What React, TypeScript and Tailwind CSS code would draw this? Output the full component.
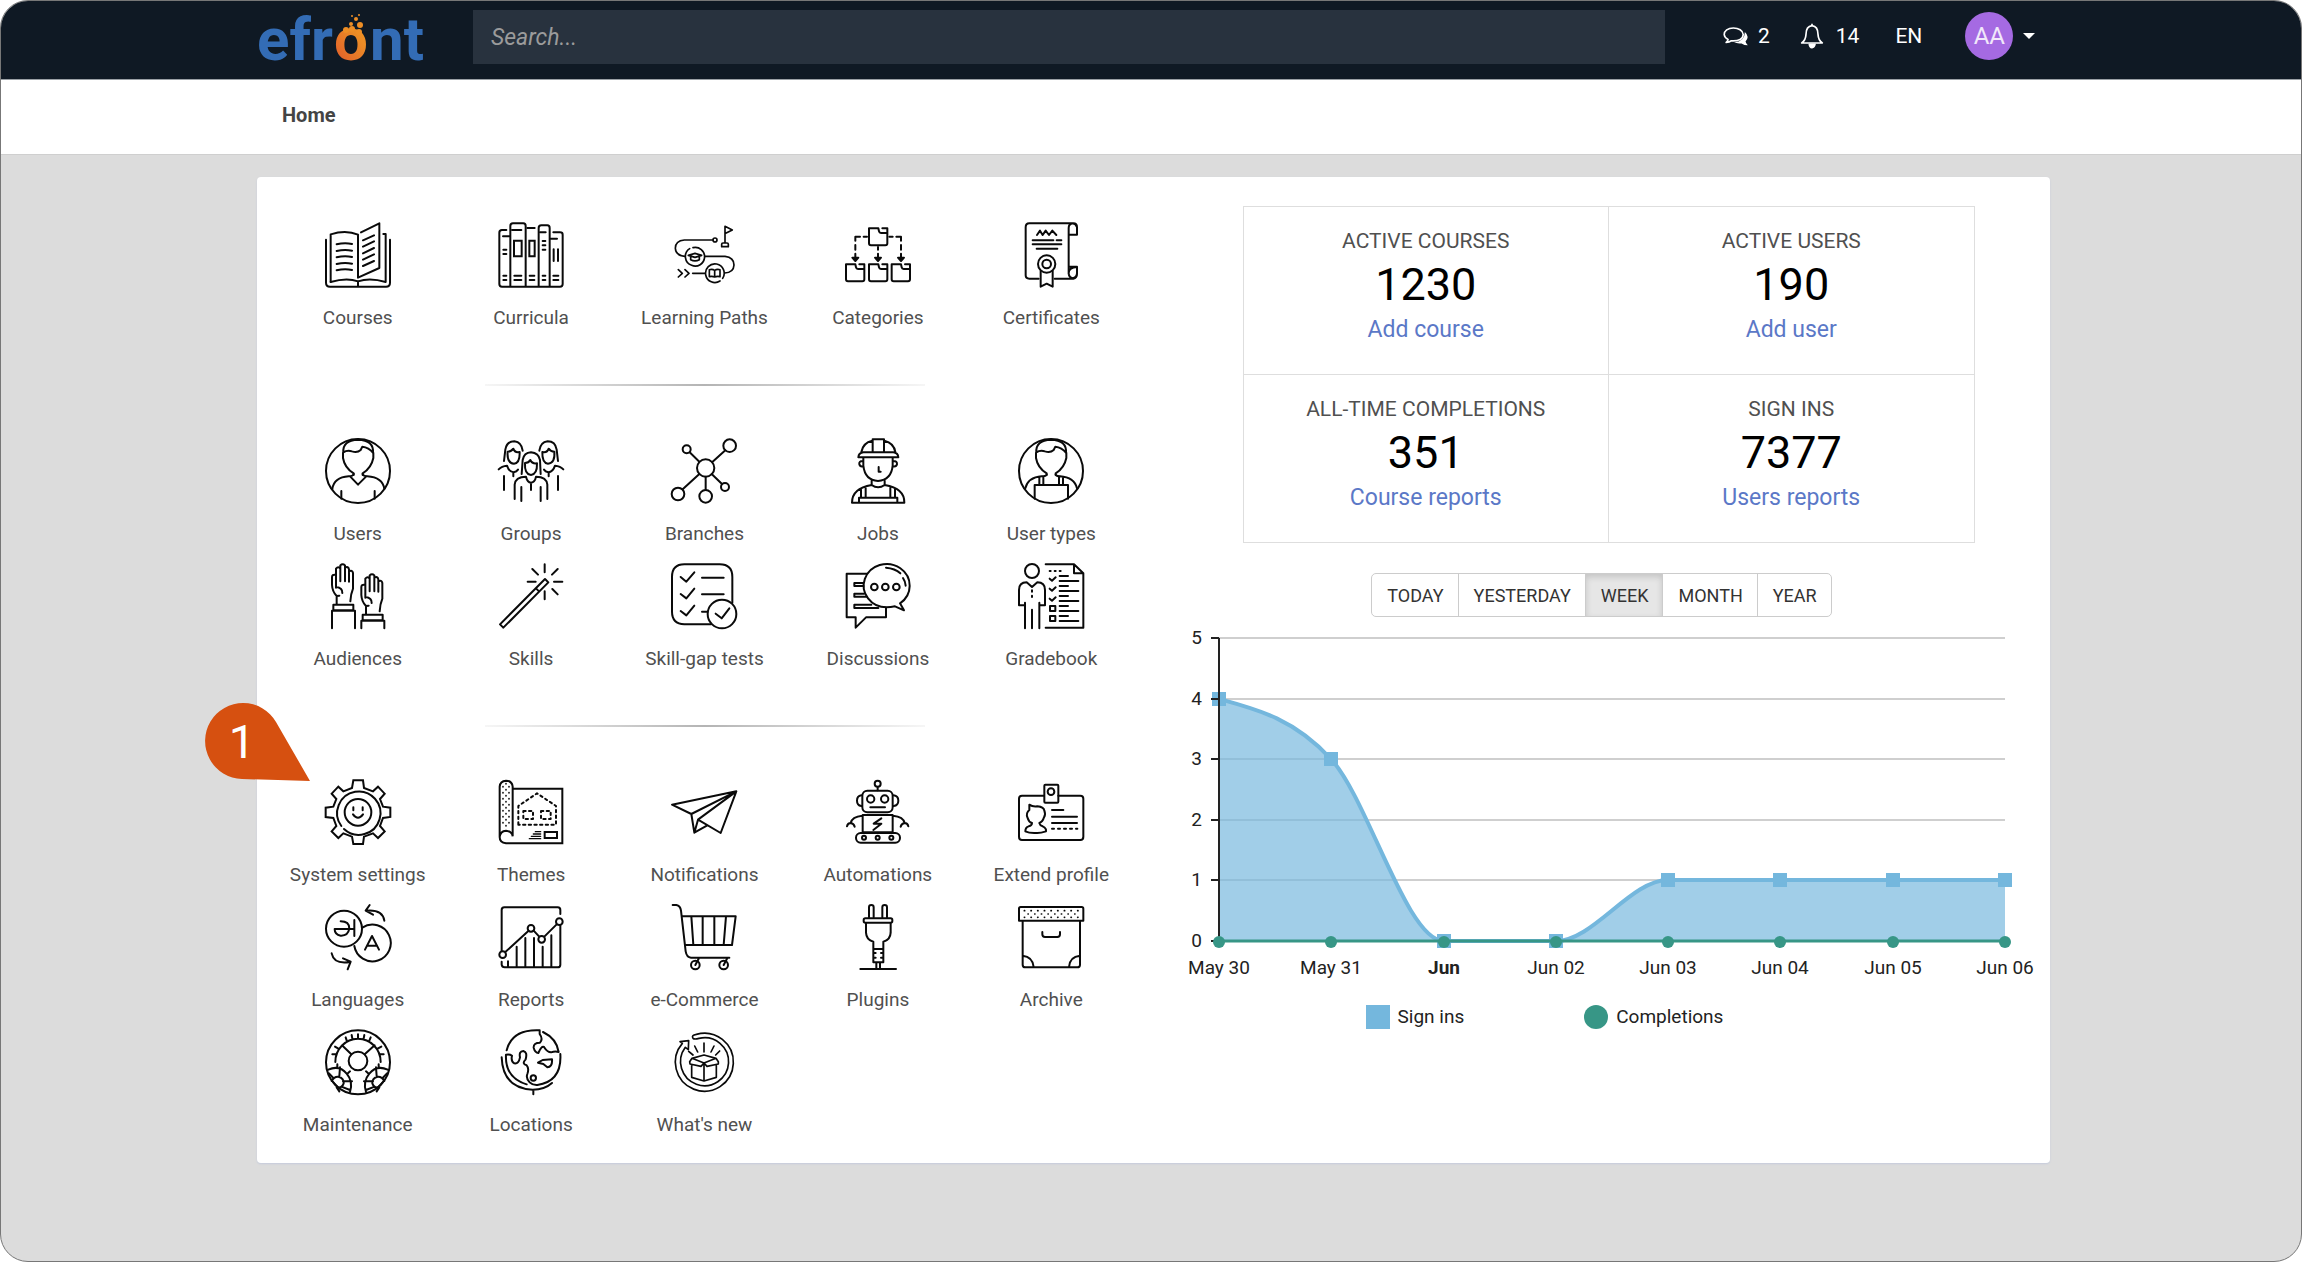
import React from "react";

type IconProps = { box: string; width?: number; children: React.ReactNode };

/** Line drawing on a 198-unit square. */
function Icon({ box, width = 6, children }: IconProps) {
  return (
    <svg
      viewBox={box}
      className="size-[66px] overflow-visible"
      fill="none"
      stroke="#0a0a0a"
      strokeWidth={width}
      strokeLinecap="round"
      strokeLinejoin="round"
      aria-hidden="true"
    >
      {children}
    </svg>
  );
}

const CoursesIcon = () => (
  <Icon box="165 64 198 198">
    <path d="M182 244V101Q228 86 264 102V231L328 202V68L273 95" />
    <path d="M168 117V246Q168 258 180 258H348Q360 258 360 246V117M182 244Q230 230 264 242Q300 230 347 244V100H340M264 242V257" />
    <path d="M200 131Q224 125 246 130M200 151Q224 145 246 150M200 170Q224 164 246 169M200 190Q224 184 246 189M200 209Q224 203 246 208" />
    <path d="M279 119L312 104M279 138L312 122M279 158L312 142M279 177L312 161M279 196L312 181" />
  </Icon>
);

const CurriculaIcon = () => (
  <Icon box="686 64 198 198">
    <path d="M711 88H698Q690 88 690 96V250Q690 258 698 258H872Q880 258 880 250V102Q880 95 872 95H852M723 258V76Q723 68 731 68H762Q769 68 769 76V258M808 258V82Q808 74 816 74H834Q841 74 841 82V258" />
    <path d="M728 88H756M701 107H720M774 82H796M812 95H829M844 114H863" />
    <path d="M734 120H757V167H734ZM780 120H796V167H780Z" strokeLinejoin="miter" />
    <path d="M702 147H711M702 160H711M820 121H828M820 134H828M820 147H828M853 146V181M866 146V181M702 225H711M702 238H711M735 225H756M735 238H756M781 225H795M781 238H795M820 225H828M820 238H828M852 225H867M852 238H867" />
  </Icon>
);

const LearningPathsIcon = () => (
  <Icon box="36 64 198 198" width={5}>
    <path d="M161 118H76Q49 120 49 143Q50 165 78 167M137 167H198Q225 170 225 193Q224 216 197 217M137 218H101M58 207L70 218L58 229M78 207L90 218L78 229" />
    <circle cx="168" cy="118" r="6" />
    <path d="M92 144A28 28 0 0 0 98 194A28 28 0 1 0 102 141M191 233A28 28 0 1 0 183 241" />
    <path d="M198 126V77L220 88L200 98M188 138V131Q188 127 192 127H204Q208 127 208 131V138Z" />
    <path d="M88 164L108 158L128 164L108 170ZM95 168V177Q108 184 121 177V168M151 207Q160 204 167 209Q174 204 183 207V228Q174 226 167 229Q160 226 151 228ZM167 209V229" />
  </Icon>
);

const folder = "M586 191H558V236Q558 242 564 242H607Q613 242 613 236V191H598M586 191L588 200Q589 205 594 205H612";
const CategoriesIcon = () => (
  <Icon box="555 64 198 198" width={6}>
    <path d={folder} />
    <path d={folder} transform="translate(69 0)" />
    <path d={folder} transform="translate(137 0)" />
    <path d={folder} transform="translate(69 -108)" />
    <path d="M621 108H611M600 108H586V120M586 133V147M586 159V178M654 139V147M654 159V178M688 108H698M709 108H723V120M723 133V147M723 159V178" />
    <path d="M577 171H595L586 181ZM645 171H663L654 181ZM714 171H732L723 181Z" fill="#0a0a0a" />
  </Icon>
);

const CertificatesIcon = () => (
  <Icon box="1074 64 198 198" width={6}>
    <path d="M1136 234H1108Q1097 234 1097 224V80Q1097 68 1108 68H1240Q1251 68 1251 80V102H1226M1184 234H1240Q1251 232 1251 220V198H1226M1226 220V82Q1226 70 1238 68Q1248 70 1251 80M1226 218Q1227 230 1238 233Q1250 230 1251 218V199Q1226 200 1226 218" />
    <path d="M1131 103L1140 90L1148 103L1157 90L1167 103L1177 90L1189 103M1118 119H1180M1190 119H1204M1118 131H1204M1130 144H1192" />
    <circle cx="1160" cy="190" r="26" />
    <circle cx="1160" cy="190" r="13" />
    <path d="M1142 211V258L1160 249L1178 258V211" />
  </Icon>
);

const userHead =
  "M220 96Q217 59 264 57Q312 59 309 97M220 95Q232 87 246 92Q262 97 272 88L277 78Q296 80 310 97V112Q304 142 278 158V163M219 96V112Q224 142 251 158V163";

const UsersIcon = () => (
  <Icon box="165 52 198 198">
    <circle cx="264" cy="151" r="96" />
    <path d={userHead} />
    <path d="M251 160Q249 167 236 167Q192 170 187 205M278 160Q280 167 292 167Q338 170 343 205M241 168L264 192L288 168M214 211V234M314 211V234" />
  </Icon>
);

const sideWoman =
  "M704 121L708 87Q712 62 735 62Q757 65 760 90M715 93Q712 127 734 129Q752 127 751 94Q736 97 732 84Q726 93 715 93M688 146Q697 136 713 135Q719 154 733 155Q742 153 746 147M732 155V167M704 166V208";
const GroupsIcon = () => (
  <Icon box="686 52 198 198">
    <path d={sideWoman} />
    <path d={sideWoman} transform="translate(1570 0) scale(-1 1)" />
    <path d="M757 160L760 118Q764 96 785 95Q808 97 812 118L814 160M767 127Q765 161 785 163Q804 161 803 128Q788 130 783 118Q778 127 767 127M736 235V192Q738 168 770 168Q774 185 785 186Q797 185 800 168Q832 168 834 192V235M785 186V208M756 199V241M814 199V241" />
  </Icon>
);

const BranchesIcon = () => (
  <Icon box="36 52 198 198">
    <circle cx="140" cy="142" r="26" />
    <circle cx="212" cy="75" r="19" />
    <circle cx="83" cy="86" r="12" />
    <circle cx="198" cy="199" r="12" />
    <circle cx="57" cy="220" r="19" />
    <circle cx="140" cy="227" r="19" />
    <path d="M160 124L199 89M121 123L92 95M158 160L189 190M121 160L71 206M140 168V208" />
  </Icon>
);

const JobsIcon = () => (
  <Icon box="555 52 198 198">
    <path d="M595 110Q596 97 610 95H700Q714 97 715 110ZM604 94Q609 66 637 60M673 60Q702 67 706 94M638 94V56H672V94" />
    <path d="M610 113V135Q615 179 654 181Q694 178 698 135V113M608 121Q596 121 598 131Q600 139 609 137M700 121Q712 121 711 131Q709 139 699 137M656 139V153H662" />
    <path d="M635 180V193Q654 207 674 193V180M635 193Q576 203 576 246H733Q734 203 674 193M597 246V231H712V246M603 206V229M617 202V229M691 202V229M705 206V229" />
  </Icon>
);

const UserTypesIcon = () => (
  <Icon box="1074 52 198 198">
    <circle cx="1173" cy="151" r="96" />
    <path d={userHead} transform="translate(909 0)" />
    <path d="M1160 162Q1158 167 1145 167Q1104 170 1096 203M1187 162Q1189 167 1200 167Q1243 170 1251 203M1124 234V193H1224V234M1138 168V192M1150 168V192M1197 168V192M1209 168V192" />
  </Icon>
);

const hand =
  "M200 549V525L208 524M200 525Q187 512 186 492V468Q186 460 196 461M198 500V443Q205 435 211 443V481M211 443V433Q218 426 225 433V481M225 440Q235 435 237 445V482M237 451Q247 446 249 456V503Q242 520 241 541M198 497Q218 500 217 516";
const AudiencesIcon = () => (
  <Icon box="165 426 198 198">
    <path d={hand} />
    <path d={hand} transform="translate(88 30)" />
    <path d="M190 551H250V568H190ZM186 622V569H255V622M278 581H338V598H278ZM274 622V599H343V622" />
  </Icon>
);

const SkillsIcon = () => (
  <Icon box="686 426 198 198">
    <path d="M692 610L827 474L837 484L702 620ZM800 502L809 511M826 430V454M826 511V535M775 482H799M854 482H879M789 444L806 461M865 444L848 461M849 504L865 520" />
  </Icon>
);

const SkillGapIcon = () => (
  <Icon box="36 426 198 198">
    <path d="M156 610H76Q39 608 39 572V468Q39 430 76 430H182Q220 430 220 468V545M65 468L82 482L106 454M65 519L82 532L106 503M65 570L82 583L106 554M129 470H194M129 520H194M129 572H145M170 578L188 592L211 562" />
    <circle cx="189" cy="579" r="43" />
  </Icon>
);

const DiscussionsIcon = () => (
  <Icon box="555 426 198 198">
    <path d="M620 458H560V589H587V620L618 589H678V560" />
    <path d="M732 568L705 556Q692 559 680 559A69 65 0 1 1 720 547Z" />
    <circle cx="643" cy="498" r="10" />
    <circle cx="676" cy="498" r="10" />
    <circle cx="709" cy="498" r="10" />
    <path d="M678 440Q705 442 721 457M729 471Q736 481 737 494M608 486H583V495H610M612 518H583V527H620M634 551H583V561H655" />
  </Icon>
);

const GradebookIcon = () => (
  <Icon box="1074 426 198 198">
    <circle cx="1116" cy="450" r="21" />
    <path d="M1095 622V545M1095 553H1077V507Q1077 484 1100 484L1116 498L1132 484Q1155 484 1155 507V553H1138M1138 545V622M1116 566V622M1116 508V512M1116 524V528" />
    <path d="M1157 430H1242L1270 457V620H1157M1242 430V457H1270M1169 450H1172M1184 450H1187M1199 450H1202M1169 473L1176 479L1187 469M1169 503L1176 509L1187 499M1169 533L1176 539L1187 529M1170 555H1186V570H1170ZM1170 585H1186V600H1170Z" />
    <path d="M1199 465H1224M1199 480H1255M1199 495H1224M1199 510H1255M1199 525H1224M1199 540H1255M1199 555H1224M1199 570H1255M1199 585H1224M1199 600H1255" />
  </Icon>
);

const SystemSettingsIcon = () => (
  <Icon box="405 265 198 198">
    <path
      strokeLinejoin="miter"
      d="M486 292L490 269H519L522 292L549 302L564 288L584 309L570 325L579 348L601 351V379L579 382L570 406L584 422L564 442L549 428L522 438L519 460H490L486 438L460 428L445 442L425 422L439 406L430 382L407 379V351L430 348L439 325L425 309L445 288L460 302Z"
    />
    <path d="M454 406A65 65 0 1 1 462 415" />
    <circle cx="504" cy="365" r="40" />
    <path d="M490 350V359M518 350V359M489 371Q504 391 519 371" />
  </Icon>
);

const ThemesIcon = () => (
  <Icon box="926 265 198 198">
    <path strokeLinejoin="miter" d="M970 294H1119V458H950Q931 456 931 439Q933 421 950 420Q968 422 970 437V288Q968 270 950 270Q932 271 931 288V439" />
    <path d="M987 402V346L1043 308L1100 346V402ZM1002 361H1031V385H1002ZM1055 361H1084V385H1055Z" strokeDasharray="7 10" />
    <path d="M941 288V412M959 288V412M950 279V412" strokeWidth="5" strokeDasharray="1 17" />
    <path strokeLinejoin="miter" d="M1066 424H1103V442H1066Z" />
    <path strokeWidth="4" d="M1038 423H1054M1032 430H1054M1026 437H1054M1020 444H1054" />
  </Icon>
);

const NotificationsIcon = () => (
  <Icon box="36 55 198 198">
    <path d="M39 132L232 92L97 160ZM97 160L106 216L117 177L232 92L185 217L117 177M106 216L145 194" />
  </Icon>
);

const AutomationsIcon = () => (
  <Icon box="555 55 198 198">
    <circle cx="653" cy="69" r="9" />
    <rect x="607" y="90" width="91" height="65" rx="15" />
    <circle cx="632" cy="115" r="11" />
    <circle cx="674" cy="115" r="11" />
    <path d="M653 79V89M631 140H675M604 104Q591 106 591 120Q591 134 604 136M701 104Q715 106 715 120Q715 134 701 136M608 163H698V215H608ZM664 173L641 189H664L640 208M607 165Q576 168 572 187M561 197Q563 187 572 187Q582 189 584 198M699 165Q730 168 734 187M745 197Q743 187 734 187Q724 189 722 198" />
    <rect x="588" y="217" width="132" height="29" rx="14" />
    <circle cx="612" cy="231" r="6" />
    <circle cx="653" cy="231" r="6" />
    <circle cx="694" cy="231" r="6" />
  </Icon>
);

const ExtendProfileIcon = () => (
  <Icon box="1074 55 198 198">
    <path d="M1152 105H1086Q1077 105 1077 114V228Q1077 238 1086 238H1261Q1270 238 1270 228V114Q1270 105 1261 105H1195" />
    <rect x="1153" y="72" width="42" height="54" rx="3" />
    <circle cx="1173" cy="93" r="10" />
    <path d="M1108 132Q1118 139 1132 137Q1152 139 1153 150Q1158 162 1152 170Q1148 184 1138 187Q1140 195 1148 197Q1160 203 1158 212Q1140 218 1128 217Q1108 218 1096 212Q1096 200 1106 197Q1116 195 1116 187Q1106 184 1103 172Q1096 158 1108 148ZM1176 148H1210M1176 168H1251M1176 187H1251" />
    <path d="M1176 204H1252" strokeDasharray="6 12" />
  </Icon>
);

const LanguagesIcon = () => (
  <Icon box="165 40 198 198">
    <circle cx="222" cy="114" r="54" />
    <path d="M277 111A55 55 0 1 1 253 166M343 90Q338 56 289 60M299 43L287 60L309 72M185 188Q192 222 240 214M219 203L242 213L233 236" />
    <path d="M253 88V136M194 115H252M212 92Q238 92 238 114Q234 136 212 135Q194 132 194 116" />
    <path d="M285 177L306 136L327 177M292 165H320" />
  </Icon>
);

const ReportsIcon = () => (
  <Icon box="686 40 198 198">
    <path d="M873 70V58Q873 50 865 50H705Q697 50 697 58V180M697 213V222Q698 230 706 230H865Q873 230 873 222V105M708 184L777 121M793 120L809 137M825 138L862 101M716 212V228M742 168V228M768 142V228M794 142V228M820 168V228M846 134V228" />
    <circle cx="700" cy="192" r="10" />
    <circle cx="785" cy="113" r="10" />
    <circle cx="817" cy="146" r="10" />
    <circle cx="870" cy="93" r="10" />
  </Icon>
);

const CommerceIcon = () => (
  <Icon box="36 430 198 198">
    <path d="M41 433H52Q64 435 66 450L80 572Q83 590 96 591H211M70 467H230L219 553H80M97 467L103 553M131 467V553M166 467V553M201 467L194 553M119 594L109 613M204 594L194 613" />
    <circle cx="109" cy="613" r="13" />
    <circle cx="194" cy="613" r="13" />
  </Icon>
);

const PluginsIcon = () => (
  <Icon box="555 430 198 198">
    <path d="M627 470V440Q627 433 634 433Q641 433 641 440V470M667 470V440Q667 433 674 433Q681 433 681 440V470M618 488V516Q619 538 640 543V605H670V543Q691 538 692 516V488M641 565H669M641 577H647M663 577H669M641 591H647M663 591H669M649 606V623M660 606V623M601 625H708" />
    <rect x="611" y="473" width="86" height="13" rx="5" />
  </Icon>
);

const ArchiveIcon = () => (
  <Icon box="1074 430 198 198">
    <path d="M1077 480V444Q1077 439 1082 439H1265Q1270 439 1270 444V480ZM1088 482V612Q1088 620 1096 620H1252Q1260 620 1260 612V482M1088 585Q1118 588 1121 619M1260 585Q1229 588 1227 619M1147 514V521Q1147 529 1155 529H1192Q1200 529 1200 521V514" />
    <path d="M1093 450H1256M1104 460H1246M1093 470H1256" strokeWidth="5" strokeDasharray="1 19" />
  </Icon>
);

const smallWheel = "M175 537Q208 522 230 549Q250 572 240 604M185 571Q192 557 205 558Q222 562 221 578Q216 592 204 590L190 575M177 548L190 562M210 530L208 556M219 572L246 572M214 588L240 598M200 590L208 602M202 530V521M232 549L240 542";
const MaintenanceIcon = () => (
  <Icon box="165 415 198 198">
    <circle cx="264" cy="515" r="96" />
    <circle cx="264" cy="511" r="28" />
    <path d="M196 514A68 70 0 0 1 332 514M244 491L216 464M284 491L314 464M264 444V431M247 444L245 433M281 444L283 433M231 452L227 440M297 452L302 440M205 474L195 468M323 474L334 468M199 491H187M329 491H341" />
    <path d={smallWheel} />
    <path d={smallWheel} transform="translate(528 0) scale(-1 1)" />
  </Icon>
);

const LocationsIcon = () => (
  <Icon box="686 415 198 198">
    <path d="M712 479Q728 415 811 419V430Q822 445 812 456Q792 456 793 471Q797 486 807 487Q816 465 824 469Q834 485 845 485Q858 480 868 484Q862 444 821 424" />
    <path d="M873 490Q878 572 804 583Q790 584 781 575Q769 563 774 550Q780 533 772 524Q756 520 769 506Q775 484 762 481Q748 482 752 500Q748 520 735 518Q724 512 728 495Q722 490 710 492Q706 560 772 581" />
    <path d="M697 500Q700 592 790 597Q826 597 848 577M792 598V611M806 516L820 508L848 506Q850 528 834 530L822 520Z" />
    <circle cx="792" cy="562" r="8" />
  </Icon>
);

const WhatsNewIcon = () => (
  <Icon box="1206 415 198 198" width={5}>
    <path d="M1272 443Q1266 434 1282 431A87 87 0 1 1 1240 458L1233 453L1259 450L1258 477L1249 470A72 72 0 1 0 1290 443Q1276 447 1272 443" />
    <path d="M1305 457V484M1277 466L1286 484M1335 466L1326 484M1259 482L1272 493M1352 481L1340 493" />
    <path d="M1262 513L1269 503L1305 493L1341 503L1348 513L1348 520L1314 527L1305 517L1296 527L1263 520ZM1269 503L1305 517L1341 503M1268 524V560L1305 571L1342 560V524M1305 519V571" />
  </Icon>
);

type Tile = { label: string; icon: () => React.JSX.Element };

const groups: Tile[][] = [
  [
    { label: "Courses", icon: CoursesIcon },
    { label: "Curricula", icon: CurriculaIcon },
    { label: "Learning Paths", icon: LearningPathsIcon },
    { label: "Categories", icon: CategoriesIcon },
    { label: "Certificates", icon: CertificatesIcon },
  ],
  [
    { label: "Users", icon: UsersIcon },
    { label: "Groups", icon: GroupsIcon },
    { label: "Branches", icon: BranchesIcon },
    { label: "Jobs", icon: JobsIcon },
    { label: "User types", icon: UserTypesIcon },
    { label: "Audiences", icon: AudiencesIcon },
    { label: "Skills", icon: SkillsIcon },
    { label: "Skill-gap tests", icon: SkillGapIcon },
    { label: "Discussions", icon: DiscussionsIcon },
    { label: "Gradebook", icon: GradebookIcon },
  ],
  [
    { label: "System settings", icon: SystemSettingsIcon },
    { label: "Themes", icon: ThemesIcon },
    { label: "Notifications", icon: NotificationsIcon },
    { label: "Automations", icon: AutomationsIcon },
    { label: "Extend profile", icon: ExtendProfileIcon },
    { label: "Languages", icon: LanguagesIcon },
    { label: "Reports", icon: ReportsIcon },
    { label: "e-Commerce", icon: CommerceIcon },
    { label: "Plugins", icon: PluginsIcon },
    { label: "Archive", icon: ArchiveIcon },
    { label: "Maintenance", icon: MaintenanceIcon },
    { label: "Locations", icon: LocationsIcon },
    { label: "What's new", icon: WhatsNewIcon },
  ],
];

function Launcher() {
  return (
    <nav aria-label="Administration" className="w-[867px] min-w-0">
      {groups.map((tiles, i) => (
        <React.Fragment key={i}>
          {i > 0 && (
            <div className="mx-auto mt-[37px] mb-[52px] h-[2px] w-[440px] bg-linear-to-r from-[#f6f6f6] via-[#b4b4b4] to-[#f6f6f6]" />
          )}
          <ul className="grid grid-cols-5">
            {tiles.map(({ label, icon: TileIcon }) => (
              <li key={label} className="h-[125px]">
                <a href="#" className="flex flex-col items-center gap-[18px] text-[19px] leading-6 whitespace-nowrap text-[#505050]">
                  <TileIcon />
                  <span>{label}</span>
                </a>
              </li>
            ))}
          </ul>
        </React.Fragment>
      ))}
    </nav>
  );
}

const stats = [
  { label: "ACTIVE COURSES", value: "1230", link: "Add course" },
  { label: "ACTIVE USERS", value: "190", link: "Add user" },
  { label: "ALL-TIME COMPLETIONS", value: "351", link: "Course reports" },
  { label: "SIGN INS", value: "7377", link: "Users reports" },
];

function Stats() {
  return (
    <div className="grid w-full max-w-[732px] grid-cols-2 border-t border-l border-[#dedede]">
      {stats.map((s) => (
        <div key={s.label} className="flex h-[168px] flex-col items-center border-r border-b border-[#dedede] pt-[21px]">
          <div className="text-[21px] leading-[26px] text-[#505050]">{s.label}</div>
          <div className="text-[45px] leading-[61px] text-black">{s.value}</div>
          <a href="#" className="text-[23px] leading-[30px] text-[#5b78c7]">
            {s.link}
          </a>
        </div>
      ))}
    </div>
  );
}

const periods = ["TODAY", "YESTERDAY", "WEEK", "MONTH", "YEAR"];

function Periods() {
  return (
    <div className="mt-[30px] mr-[14px] flex h-[44px] overflow-hidden rounded-[5px] border border-[#ccc] text-[18px] text-[#333]">
      {periods.map((p) => (
        <button
          key={p}
          type="button"
          aria-pressed={p === "WEEK"}
          className="border-l border-[#ccc] pr-[14px] pl-[15px] first:border-l-0 aria-pressed:bg-[#e6e6e6] aria-pressed:shadow-[inset_0_3px_6px_rgba(0,0,0,0.15)]"
        >
          {p}
        </button>
      ))}
    </div>
  );
}

const days = ["May 30", "May 31", "Jun", "Jun 02", "Jun 03", "Jun 04", "Jun 05", "Jun 06"];
const signIns = [4, 3, 0, 0, 1, 1, 1, 1];
const slopes = [-0.5, -2, 0, 0, 0, 0, 0, 0];
const left = 40;
const base = 318;
const stepX = 112;
const stepY = 61;
const px = (i: number) => left + i * stepX + Math.round(i * 0.25);
const py = (v: number) => Math.round(base - v * 60.6);
const curve = signIns
  .map((v, i) => {
    if (i === 0) return `M${px(0)} ${py(v)}`;
    const a = py(signIns[i - 1]) - (slopes[i - 1] * stepY) / 3;
    const b = py(v) + (slopes[i] * stepY) / 3;
    return `C${px(i - 1) + stepX / 3} ${a} ${px(i) - stepX / 3} ${b} ${px(i)} ${py(v)}`;
  })
  .join("");

function Chart() {
  return (
    <div className="mt-[6px] w-full max-w-[860px]">
      <svg viewBox="0 0 860 360" className="w-full" role="img" aria-label="Sign ins and completions per day">
        {[1, 2, 3, 4, 5].map((v) => (
          <path key={v} d={`M${left} ${py(v)}H${px(7)}`} stroke="#cfcfcf" strokeWidth="2" />
        ))}
        <path d={`${curve}V${base}H${left}Z`} fill="#74b7dd" fillOpacity="0.68" />
        <path d={curve} fill="none" stroke="#74b7dd" strokeWidth="4" />
        {signIns.map((v, i) => (
          <rect key={i} x={px(i) - 7} y={py(v) - 7} width="14" height="14" fill="#74b7dd" />
        ))}
        {[0, 1, 2, 3, 4, 5].map((v) => (
          <g key={v}>
            <path d={`M${left - 8} ${py(v)}H${left}`} stroke="#222" strokeWidth="2" />
            <text x="23" y={py(v) + 6} textAnchor="end" fontSize="19" fill="#222">
              {v}
            </text>
          </g>
        ))}
        <path d={`M${left} ${base}V${py(5)}`} stroke="#222" strokeWidth="2" />
        <path d={`M${left} ${base}H${px(7)}`} stroke="#379686" strokeWidth="3" />
        {days.map((d, i) => (
          <g key={d}>
            <circle cx={px(i)} cy={base + 1} r="6" fill="#379686" />
            <text x={px(i)} y={base + 33} textAnchor="middle" fontSize="19" fontWeight={d === "Jun" ? 700 : 400} fill="#222">
              {d}
            </text>
          </g>
        ))}
      </svg>
      <div className="mt-[22px] flex gap-[120px] pl-[187px] text-[19px] leading-6 text-[#222]">
        <div className="flex items-center gap-2">
          <span className="size-6 bg-[#74b7dd]" />
          Sign ins
        </div>
        <div className="flex items-center gap-2">
          <span className="size-6 rounded-full bg-[#379686]" />
          Completions
        </div>
      </div>
    </div>
  );
}

function Logo() {
  return (
    <svg viewBox="0 0 172 72" className="h-[72px] w-[172px] shrink-0 overflow-visible" role="img" aria-label="efront">
      <defs>
        <linearGradient id="flame" x1="0.2" y1="1" x2="0.8" y2="0">
          <stop offset="0" stopColor="#e0572c" />
          <stop offset="0.6" stopColor="#ea8a26" />
          <stop offset="1" stopColor="#f59b20" />
        </linearGradient>
      </defs>
      <g fontSize="60" fontWeight="700" fill="#336cb5">
        <text x="0" y="59">efr</text>
        <text x="77" y="59" fill="url(#flame)">o</text>
        <text x="113" y="59">nt</text>
      </g>
      <g fill="#ee8e25">
        <circle cx="89" cy="29" r="3" />
        <circle cx="95" cy="28" r="3" />
        <circle cx="102" cy="31" r="3" />
        <circle cx="94" cy="23" r="2" />
        <circle cx="103" cy="24" r="3" />
        <circle cx="99" cy="18" r="2" />
        <circle cx="95" cy="15" r="1" />
        <circle cx="102" cy="14" r="1" />
      </g>
    </svg>
  );
}

function Header() {
  return (
    <header className="h-[79px] border-b border-[#9aa0a5] bg-[#0f1924] pl-[5px]">
      <div className="mx-auto flex max-w-[1793px] items-start text-[21px] leading-6 text-white">
        <a href="#" className="shrink-0">
          <Logo />
        </a>
        <input
          type="search"
          aria-label="Search"
          placeholder="Search..."
          className="mt-[9px] ml-11 h-[54px] w-[1192px] min-w-0 bg-[#28323e] px-[18px] text-[23px] italic placeholder:text-[#9b9b9b]"
        />
        <div className="mt-[11px] ml-[58px] flex h-12 items-center">
          <button type="button" aria-label="2 messages" className="flex items-center gap-[9px]">
            <svg viewBox="68 62 78 64" className="h-[21px] w-[26px]" fill="none" stroke="#fff" strokeWidth="5" strokeLinejoin="round" aria-hidden="true">
              <path d="M99 68C82 68 71 77 71 88Q72 98 83 103Q81 109 77 112Q87 111 93 107Q128 109 129 88C128 76 115 68 99 68Z" />
              <path d="M134 80Q150 94 136 109Q138 115 143 121Q132 121 124 115Q110 117 101 111Q134 110 134 80Z" fill="#fff" stroke="none" />
            </svg>
            2
          </button>
          <button type="button" aria-label="14 notifications" className="ml-[30px] flex items-center gap-3">
            <svg viewBox="300 54 72 78" className="h-[26px] w-6" fill="none" stroke="#fff" strokeWidth="5" strokeLinejoin="round" aria-hidden="true">
              <path d="M336 62C320 64 318 76 318 88Q317 106 305 114H367Q355 106 354 88C354 76 352 64 336 62ZM336 62V56" />
              <path d="M328 118Q329 127 336 128Q343 127 345 118Z" fill="#fff" />
            </svg>
            14
          </button>
          <button type="button" className="ml-9">EN</button>
          <button type="button" aria-label="Account" className="ml-[43px] flex items-center gap-[10px]">
            <span className="flex size-12 items-center justify-center rounded-full bg-[#a56ae2] text-[24px] text-[#f1e8fa]">AA</span>
            <svg viewBox="0 0 12 6" className="h-[6px] w-3" aria-hidden="true">
              <path d="M0 0H12L6 6Z" fill="#fff" />
            </svg>
          </button>
        </div>
      </div>
    </header>
  );
}

function Callout() {
  return (
    <svg viewBox="0 0 108 80" className="absolute top-[525px] -left-[54px] h-20 w-[108px]" role="img" aria-label="Step 1">
      <path d="M39 77A38 38 0 1 1 73 20L107 79Z" fill="#d65010" />
      <text x="39" y="56" textAnchor="middle" fontSize="47" fill="#fff">1</text>
    </svg>
  );
}

export default function App() {
  return (
    <div className="bg-white font-['Roboto',sans-serif]">
      <div className="flex min-h-screen flex-col overflow-hidden rounded-[28px] border border-[#777] bg-[#dcdcdc]">
        <Header />
        <div className="border-b border-[#cfcfcf] bg-white pl-[5px]">
          <div className="mx-auto max-w-[1793px] px-[25px] pt-[21px] pb-[25px] text-[20px] leading-7 font-bold text-[#444]">Home</div>
        </div>
        <main className="pt-[22px] pl-[5px]">
          <div className="relative mx-auto flex max-w-[1793px] rounded-[4px] bg-white pt-[45px] pb-[9px] pl-[14px] shadow-[0_1px_2px_#c5cbdc]">
            <Launcher />
            <section aria-label="Activity" className="-mt-4 flex min-w-0 flex-1 flex-col items-center pl-[29px]">
              <Stats />
              <Periods />
              <Chart />
            </section>
            <Callout />
          </div>
        </main>
      </div>
    </div>
  );
}
